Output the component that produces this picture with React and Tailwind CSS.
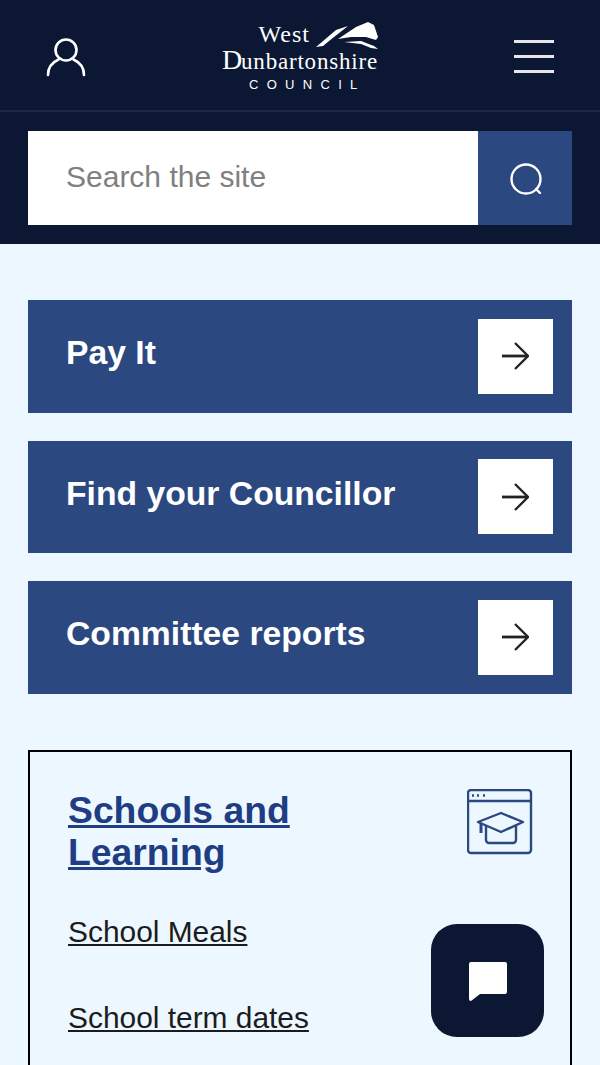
const quickLinks = ['Pay It', 'Find your Councillor', 'Committee reports']

function UserIcon() {
  return (
    <svg width="40" height="40" viewBox="0 0 40 40" fill="none" stroke="white" strokeWidth="2.6" strokeLinecap="round">
      <circle cx="20" cy="13" r="10.5" />
      <path d="M2 38c0-8 5-13 10.500-15.500M38 38c0-8-5-13-10.500-15.500" />
    </svg>
  )
}

function SearchIcon() {
  return (
    <svg width="34" height="34" viewBox="0 0 34 34" fill="none" stroke="white" strokeWidth="2.4" strokeLinecap="round">
      <circle cx="17" cy="17" r="14.500" />
      <path d="M27 27l4 4" />
    </svg>
  )
}

function ArrowIcon() {
  return (
    <svg width="28" height="28" viewBox="0 0 28 28" fill="none" stroke="#222" strokeWidth="2.300">
      <path d="M1 14h25" strokeWidth="2.800" />
      <path d="M14 1l13 13-13 13" />
    </svg>
  )
}

function Swoosh() {
  return (
    <svg width="62" height="27" viewBox="0 0 62 27" fill="white">
      <path d="M0 25L20 8 32 4 13 19 7 24Z" />
      <path d="M22 17L40 5 52 0 58 3 62 15 60 18 50 15 35 15Z" />
      <path d="M28 20L45 19 58 24 62 27 55 26 45 22Z" />
    </svg>
  )
}

function CapIcon() {
  return (
    <svg className="-mr-px -mt-px" width="66" height="66" viewBox="0 0 66 66" fill="none" stroke="#2b4881" strokeWidth="2.400" strokeLinejoin="round">
      <rect x="1" y="1" width="63" height="63" rx="3" />
      <path d="M1 12h63" />
      <path d="M5 6.500h2M10 6.500h2M16 6.500h2" />
      <path d="M11 33l23-9 22 9-22 10Z" />
      <path d="M19 37v14a3 3 0 0 0 3 3h24a3 3 0 0 0 3-3V37" />
      <path d="M14 34v10" strokeWidth="3" />
    </svg>
  )
}

export default function App() {
  return (
    <div className="relative h-[1065px] overflow-hidden bg-[#edf7ff] font-['Liberation_Sans',Arial,sans-serif]">
      <header className="bg-[#0b1733]">
        <div className="flex h-[112px] items-start justify-between border-b-2 border-[#1c2942] px-[46px]">
          <div className="pt-[37px]">
            <UserIcon />
          </div>
          <div className="flex w-[156px] flex-col pt-[22px] text-white font-['Liberation_Serif',serif]">
            <div className="flex justify-end">
              <span className="mr-[6px] text-[24px] leading-[24px] tracking-[1px]">West</span>
              <Swoosh />
            </div>
            <div className="-mt-[1px] whitespace-nowrap text-[23px] leading-[24px] tracking-[0.8px]">
              <span className="-mr-[2px] text-[28px] leading-[24px]">D</span>unbartonshire
            </div>
            <div className="mt-[3px] whitespace-nowrap pl-[27px] text-[13px] leading-[16px] tracking-[8.300px] font-['Liberation_Sans',sans-serif]">COUNCIL</div>
          </div>
          <div className="flex w-[40px] flex-col gap-[12px] pt-[40px]">
            <span className="h-[3px] bg-[#e4e6ea]" />
            <span className="h-[3px] bg-[#e4e6ea]" />
            <span className="h-[3px] bg-[#e4e6ea]" />
          </div>
        </div>
        <div className="px-[28px] py-[19px]">
          <div className="flex h-[94px]">
            <div className="flex flex-1 items-center bg-white pb-[3px] pl-[38px] text-[30px] text-[#808080]">Search the site</div>
            <div className="flex w-[94px] items-center justify-center bg-[#2b4881] pl-[2px] pt-[2px]">
              <SearchIcon />
            </div>
          </div>
        </div>
      </header>

      <main className="px-[28px] pt-[56px]">
        <div className="flex flex-col gap-[28px]">
          {quickLinks.map((label) => (
            <a key={label} className="flex h-[112.500px] items-center justify-between bg-[#2b4881] pl-[38px] pr-[19px]">
              <span className="pb-[7px] text-[33.700px] font-bold text-white">{label}</span>
              <span className="flex h-[75px] w-[75px] items-center justify-center bg-white pr-[1px]">
                <ArrowIcon />
              </span>
            </a>
          ))}
        </div>

        <section className="mt-[56px] flex border-2 border-black px-[38px] pb-[80px] pt-[37px]">
          <div className="flex-1">
            <h2 className="text-[37.300px] font-bold leading-[42px] text-[#1f3d83] underline">Schools and<br />Learning</h2>
            <ul className="mt-[42px] flex flex-col gap-[52px] text-[29.900px] leading-[34px] text-[#1c1c1c] underline">
              <li>School Meals</li>
              <li>School term dates</li>
            </ul>
          </div>
          <div className="pt-[1px]">
            <CapIcon />
          </div>
        </section>
      </main>

      <button className="absolute left-[431px] top-[924px] flex h-[113px] w-[113px] items-center justify-center rounded-[26px] bg-[#0b1733]">
        <svg width="40" height="40" viewBox="0 0 40 40" fill="white">
          <path d="M3 1h34a2 2 0 0 1 2 2v28a2 2 0 0 1-2 2H12l-9 7a2 2 0 0 1-2-2V3a2 2 0 0 1 2-2Z" />
        </svg>
      </button>
    </div>
  )
}
